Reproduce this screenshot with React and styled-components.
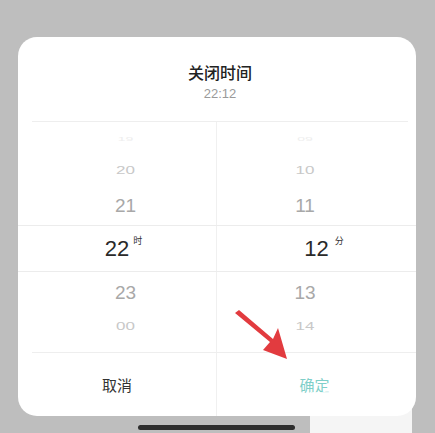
import styled, { createGlobalStyle } from "styled-components";

const Global = createGlobalStyle`
  html, body {
    margin: 0;
    padding: 0;
    background: #bebebe;
  }
  body {
    font-family: "Liberation Sans", "Noto Sans CJK SC", sans-serif;
  }
`;

const Screen = styled.div`
  position: relative;
  width: 435px;
  height: 433px;
  padding: 37px 19px 0 18px;
  box-sizing: border-box;
  overflow: hidden;
`;

const Card = styled.div`
  background: #fff;
  border-radius: 19px;
  height: 379px;
  display: flex;
  flex-direction: column;
  overflow: hidden;
`;

const Header = styled.div`
  height: 85px;
  margin: 0 8px 0 14px;
  border-bottom: 1px solid #eeeeee;
  display: flex;
  flex-direction: column;
  align-items: center;
  padding-top: 24px;
  box-sizing: border-box;
`;

const Title = styled.div`
  font-family: "Noto Sans CJK SC", sans-serif;
  font-size: 16px;
  font-weight: 500;
  color: #222;
  line-height: 22px;
`;

const Subtitle = styled.div`
  font-size: 13px;
  color: #9a9a9a;
  line-height: 18px;
  margin-top: 2px;
`;

const Picker = styled.div`
  display: flex;
  flex-direction: column;
`;

const Row = styled.div`
  display: grid;
  grid-template-columns: 199px 1fr;
  height: ${({ $h }) => $h}px;
  box-sizing: border-box;
  border-top: ${({ $selected }) => ($selected ? "1px solid #ececec" : "none")};
  border-bottom: ${({ $selected }) => ($selected ? "1px solid #ececec" : "none")};
`;

const Cell = styled.div`
  display: flex;
  align-items: center;
  justify-content: center;
  border-right: ${({ $left }) => ($left ? "1px solid #f0f0f0" : "none")};
  padding-left: ${({ $pl }) => $pl || 0}px;
  padding-right: ${({ $pr }) => $pr || 0}px;
`;

const Num = styled.span`
  position: relative;
  font-size: ${({ $size }) => $size}px;
  color: ${({ $color }) => $color};
  transform: scaleY(${({ $squash }) => $squash || 1});
  line-height: 1;
`;

const Unit = styled.sup`
  position: absolute;
  left: 100%;
  top: -2px;
  margin-left: ${({ $gap }) => $gap}px;
  font-family: "Noto Sans CJK SC", sans-serif;
  font-size: 9px;
  color: #333;
`;

const Footer = styled.div`
  flex: 1;
  margin-left: 14px;
  border-top: 1px solid #eeeeee;
  display: grid;
  grid-template-columns: 185px 1fr;
`;

const FootButton = styled.div`
  display: flex;
  align-items: center;
  justify-content: center;
  font-family: "Noto Sans CJK SC", sans-serif;
  font-size: 15px;
  color: ${({ $color }) => $color};
  border-right: ${({ $left }) => ($left ? "1px solid #f0f0f0" : "none")};
  padding-right: ${({ $pr }) => $pr || 0}px;
`;

const HomeBar = styled.div`
  width: 157px;
  height: 5px;
  border-radius: 3px;
  background: #2e2e2e;
  margin: 9px 0 0 120px;
`;

const Arrow = styled.svg`
  position: absolute;
  left: 230px;
  top: 305px;
`;

const Watermark = styled.div`
  position: absolute;
  left: 310px;
  top: 392px;
  width: 102px;
  height: 41px;
  background: rgba(255, 255, 255, 0.85);
`;

const rows = [
  { h: 33, l: "19", r: "09", size: 14, color: "#eeeeee", squash: 0.35 },
  { h: 31, l: "20", r: "10", size: 17, color: "#c8c8c8", squash: 0.65 },
  { h: 39, l: "21", r: "11", size: 19, color: "#a8a8a8" },
  { h: 47, l: "22", r: "12", size: 22, color: "#2a2a2a", selected: true },
  { h: 40, l: "23", r: "13", size: 19, color: "#a8a8a8" },
  { h: 28, l: "00", r: "14", size: 17, color: "#c8c8c8", squash: 0.65 },
  { h: 12, l: "", r: "", size: 14, color: "#eee" },
];

export default function App() {
  return (
    <>
      <Global />
      <Screen>
        <Card>
          <Header>
            <Title>关闭时间</Title>
            <Subtitle>22:12</Subtitle>
          </Header>
          <Picker>
            {rows.map((r, i) => (
              <Row key={i} $h={r.h} $selected={r.selected}>
                <Cell $left $pl={r.selected ? 0 : 17}>
                  <Num $size={r.size} $color={r.color} $squash={r.squash}>
                    {r.l}
                    {r.selected && <Unit $gap={4}>时</Unit>}
                  </Num>
                </Cell>
                <Cell $pr={r.selected ? 0 : 23}>
                  <Num $size={r.size} $color={r.color} $squash={r.squash}>
                    {r.r}
                    {r.selected && <Unit $gap={6}>分</Unit>}
                  </Num>
                </Cell>
              </Row>
            ))}
          </Picker>
          <Footer>
            <FootButton $left $color="#333" $pr={14}>取消</FootButton>
            <FootButton $color="#7fcfc9" $pr={4}>确定</FootButton>
          </Footer>
        </Card>
        <HomeBar />
        <Arrow width="70" height="65" viewBox="0 0 70 65">
          <polygon
            points="5,8 9,5 43,34 48,23 57,54 33,45 40,37"
            fill="#e23b3f"
          />
        </Arrow>
        <Watermark />
      </Screen>
    </>
  );
}
